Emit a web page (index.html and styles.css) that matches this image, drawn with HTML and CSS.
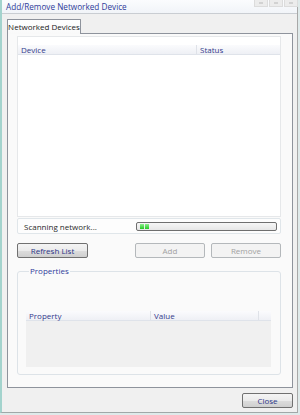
FILE: index.html
```html
<!DOCTYPE html>
<html>
<head>
<meta charset="utf-8">
<link rel="stylesheet" href="styles.css">
</head>
<body>
<div class="window">
  <div class="titlebar">
    <span class="title">Add/Remove Networked Device</span>
    <div class="caption">
      <span class="cbtn"><i class="g-min"></i></span>
      <span class="cbtn"><i class="g-max"></i></span>
      <span class="cbtn"><i class="g-x"></i></span>
    </div>
  </div>
  <div class="client">
    <div class="tabs"><div class="tab">Networked Devices</div></div>
    <div class="panel">
      <div class="devlist">
        <div class="lvhead">
          <div class="col c-device">Device</div>
          <div class="col c-status">Status</div>
        </div>
      </div>
      <div class="scan">
        <span class="scan-text">Scanning network...</span>
        <div class="progress"><i></i><i></i></div>
      </div>
      <div class="btnrow">
        <button class="btn w-refresh">Refresh List</button>
        <span class="spacer"></span>
        <button class="btn w-add" disabled>Add</button>
        <button class="btn w-remove" disabled>Remove</button>
      </div>
      <div class="group">
        <div class="legend">Properties</div>
        <div class="proplist">
          <div class="lvhead">
            <div class="col c-prop">Property</div>
            <div class="col c-value">Value</div>
            <div class="col c-rest"></div>
          </div>
          <div class="propbody"></div>
        </div>
      </div>
    </div>
    <div class="footer"><button class="btn close">Close</button></div>
  </div>
</div>
</body>
</html>
```

FILE: styles.css
```css
html, body {
  margin: 0;
  padding: 0;
}
body {
  width: 300px;
  height: 415px;
  background: #dfeaea;
  font-family: "Open Sans", "DejaVu Sans", sans-serif;
  font-size: 8px;
  color: #222;
  overflow: hidden;
}
.window {
  width: 298px;
  height: 413px;
  box-sizing: border-box;
  border-left: 2px solid #a3d3cd;
  border-right: 1px solid #a8a8a8;
  border-bottom: 1px solid #a0a8a8;
  background: #f0f0f0;
  display: flex;
  flex-direction: column;
}
.titlebar {
  height: 14px;
  box-sizing: border-box;
  border-bottom: 1px solid #c9cdd2;
  background: linear-gradient(#fbfcfe, #f1f4f8);
  display: flex;
  align-items: flex-start;
}
.title {
  font-size: 8.2px;
  line-height: 13px;
  color: #2f3c9a;
  padding-left: 4px;
  flex: 1;
}
.caption {
  display: flex;
  gap: 1px;
  margin-right: -1px;
}
.cbtn {
  width: 14px;
  height: 7px;
  box-sizing: border-box;
  border: 1px solid #dcdcdc;
  border-top: none;
  background: #ececec;
  display: flex;
  align-items: center;
  justify-content: center;
}
.cbtn i {
  display: block;
  width: 4px;
  height: 2px;
  background: #d2d2d2;
}
.client {
  flex: 1;
  padding: 5px 4px 4px 5px;
  display: flex;
  flex-direction: column;
}
.tabs {
  display: flex;
  height: 14px;
}
.tab {
  width: 74px;
  height: 15px;
  box-sizing: border-box;
  border: 1px solid #8e939c;
  border-bottom: none;
  background: linear-gradient(#ffffff, #f9f9f9);
  position: relative;
  z-index: 1;
  text-align: center;
  line-height: 14px;
  color: #1a1a1a;
  border-radius: 1px 1px 0 0;
}
.panel {
  height: 355px;
  box-sizing: border-box;
  border: 1px solid #8e939c;
  background: #fafafa;
  padding: 2px 11px 12px 9px;
  display: flex;
  flex-direction: column;
}
.devlist {
  height: 181px;
  box-sizing: border-box;
  border: 1px solid #e6e8ea;
  background: #ffffff;
  padding-top: 8px;
}
.lvhead {
  height: 10px;
  box-sizing: border-box;
  display: flex;
  background: linear-gradient(#fbfbfd, #eef0f5);
  border-bottom: 1px solid #dfe3ea;
  color: #333a8c;
  line-height: 9px;
}
.col {
  box-sizing: border-box;
  padding-left: 3px;
  border-right: 1px solid #dfe2e8;
}
.c-device { width: 179px; }
.c-status { flex: 1; border-right: none; }
.scan {
  margin-top: 1px;
  height: 16px;
  box-sizing: border-box;
  border: 1px solid #e0e6ea;
  border-radius: 2px;
  background: #fdfdfd;
  display: flex;
  align-items: center;
  padding: 0 3px 0 6px;
}
.scan-text {
  flex: 1;
  color: #2a2a2a;
}
.progress {
  width: 141px;
  height: 9px;
  box-sizing: border-box;
  border: 1px solid #6f6f6f;
  border-radius: 2px;
  background: linear-gradient(#f6f6f6, #e6e6e6);
  display: flex;
  gap: 1px;
  padding: 1px 3px;
}
.progress i {
  display: block;
  width: 4px;
  height: 5px;
  background: linear-gradient(#8ff08f, #22c822);
}
.btnrow {
  margin-top: 9px;
  display: flex;
  gap: 6px;
}
.spacer { flex: 1; }
.btn {
  height: 15px;
  box-sizing: border-box;
  border: 1px solid #707070;
  border-radius: 2px;
  background: linear-gradient(#f4f4f4 0%, #ebebeb 50%, #dddddd 51%, #cfcfcf 100%);
  font-family: "Open Sans", "DejaVu Sans", sans-serif;
  font-size: 8px;
  line-height: 12px;
  color: #2b3586;
  padding: 0;
  margin: 0;
}
.btn:disabled {
  border-color: #b4b8bb;
  background: #f3f3f3;
  color: #a2a2a2;
}
.w-refresh { width: 71px; }
.w-add { width: 70px; }
.w-remove { width: 70px; }
.group {
  margin-top: 13px;
  height: 104px;
  box-sizing: border-box;
  border: 1px solid #dde3e8;
  border-radius: 3px;
  padding: 0 9px 7px 8px;
  display: flex;
  flex-direction: column;
}
.legend {
  align-self: flex-start;
  color: #2f3c9a;
  background: #fafafa;
  padding: 0 1px;
  margin: -6px 0 0 3px;
  line-height: 10px;
}
.proplist {
  margin-top: auto;
  height: 56px;
  display: flex;
  flex-direction: column;
}
.c-prop { width: 125px; }
.c-value { width: 108px; }
.c-rest { flex: 1; border-right: none; }
.propbody {
  flex: 1;
  background: #f0f0f0;
}
.footer {
  margin-top: 5px;
  display: flex;
  justify-content: flex-end;
}
.close {
  width: 51px;
  color: #2b3586;
}
```
